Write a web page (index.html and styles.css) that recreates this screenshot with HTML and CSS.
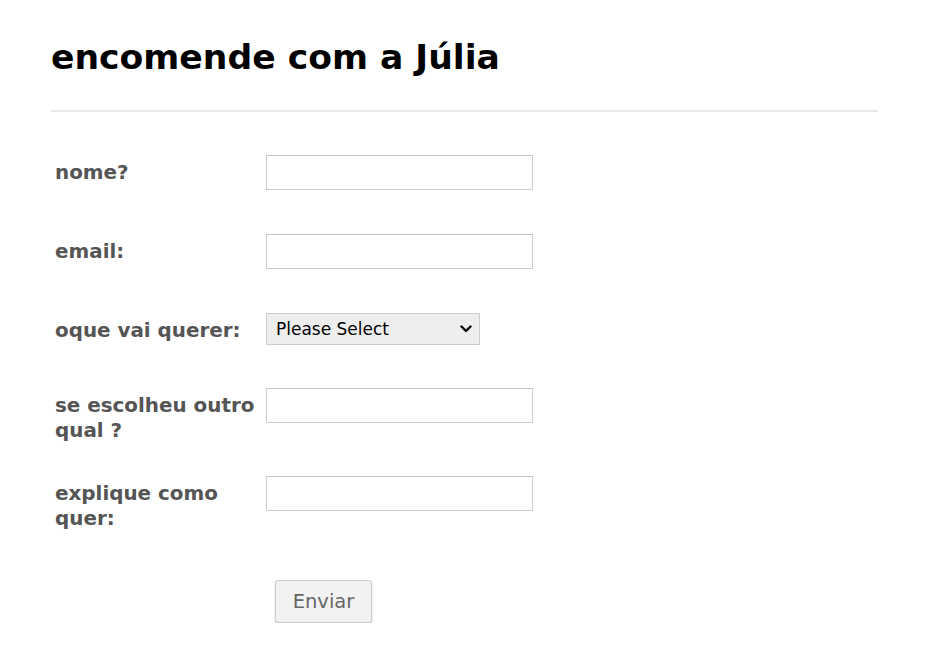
FILE: index.html
```html
<!DOCTYPE html>
<html>
<head>
<meta charset="utf-8">
<link rel="stylesheet" href="styles.css">
</head>
<body>
<div class="page">
  <h1 class="title">encomende com a Júlia</h1>
  <hr class="rule">
  <form class="form">
    <div class="row">
      <label class="label">nome?</label>
      <input class="field" type="text">
    </div>
    <div class="row">
      <label class="label">email:</label>
      <input class="field" type="text">
    </div>
    <div class="row row-select">
      <label class="label">oque vai querer:</label>
      <div class="select-wrap">
        <select class="select"><option>Please Select</option></select>
        <svg class="chevron" width="12" height="8" viewBox="0 0 12 8"><path d="M1.5 1.5 L6 6 L10.5 1.5" fill="none" stroke="#000" stroke-width="2.4" stroke-linecap="round" stroke-linejoin="round"/></svg>
      </div>
    </div>
    <div class="row row-tall">
      <label class="label">se escolheu outro qual ?</label>
      <input class="field" type="text">
    </div>
    <div class="row row-last">
      <label class="label">explique como quer:</label>
      <input class="field" type="text">
    </div>
    <div class="row-button">
      <button class="button" type="button">Enviar</button>
    </div>
  </form>
</div>
</body>
</html>
```

FILE: styles.css
```css
html, body {
  margin: 0;
  padding: 0;
  background: #fff;
}
.page {
  padding: 0 52px 0 51px;
  font-family: "DejaVu Sans", Verdana, sans-serif;
}
.title {
  margin: 0;
  padding-top: 36px;
  font-size: 34.6px;
  line-height: 42px;
  font-weight: bold;
  color: #000;
}
.rule {
  margin: 32px 0 0 0;
  border: 0;
  border-top: 2px solid #e8e8e8;
  height: 0;
}
.form {
  padding-top: 43px;
}
.row {
  display: flex;
  align-items: flex-start;
  margin-bottom: 44px;
}
.row-select {
  margin-bottom: 43px;
}
.row-tall {
  margin-bottom: 33px;
}
.row-last {
  margin-bottom: 0;
}
.label {
  width: 206px;
  margin-left: 4px;
  margin-right: 5px;
  padding-top: 5px;
  font-size: 19.9px;
  line-height: 25px;
  font-weight: bold;
  color: #555;
}
.field {
  box-sizing: border-box;
  width: 267px;
  height: 35px;
  margin: 0;
  border: 1px solid #ccc;
  border-top-color: #c4c4c4;
  background: #fff;
}
.select-wrap {
  position: relative;
  width: 214px;
  height: 32px;
}
.select {
  box-sizing: border-box;
  -webkit-appearance: none;
  appearance: none;
  width: 214px;
  height: 32px;
  margin: 0;
  border: 1px solid #ccc;
  border-radius: 0;
  background: #eee;
  font-family: "DejaVu Sans", Verdana, sans-serif;
  font-size: 17px;
  color: #000;
  padding: 0 9px;
}
.chevron {
  position: absolute;
  right: 8px;
  top: 12px;
  pointer-events: none;
}
.row-button {
  padding-left: 224px;
  padding-top: 49px;
}
.button {
  box-sizing: border-box;
  width: 97px;
  height: 43px;
  border: 1px solid #ccc;
  border-radius: 3px;
  background: #f2f2f2;
  box-shadow: 0 1px 2px rgba(0,0,0,0.2);
  font-family: "DejaVu Sans", Verdana, sans-serif;
  font-size: 19.5px;
  color: #666;
}
```
